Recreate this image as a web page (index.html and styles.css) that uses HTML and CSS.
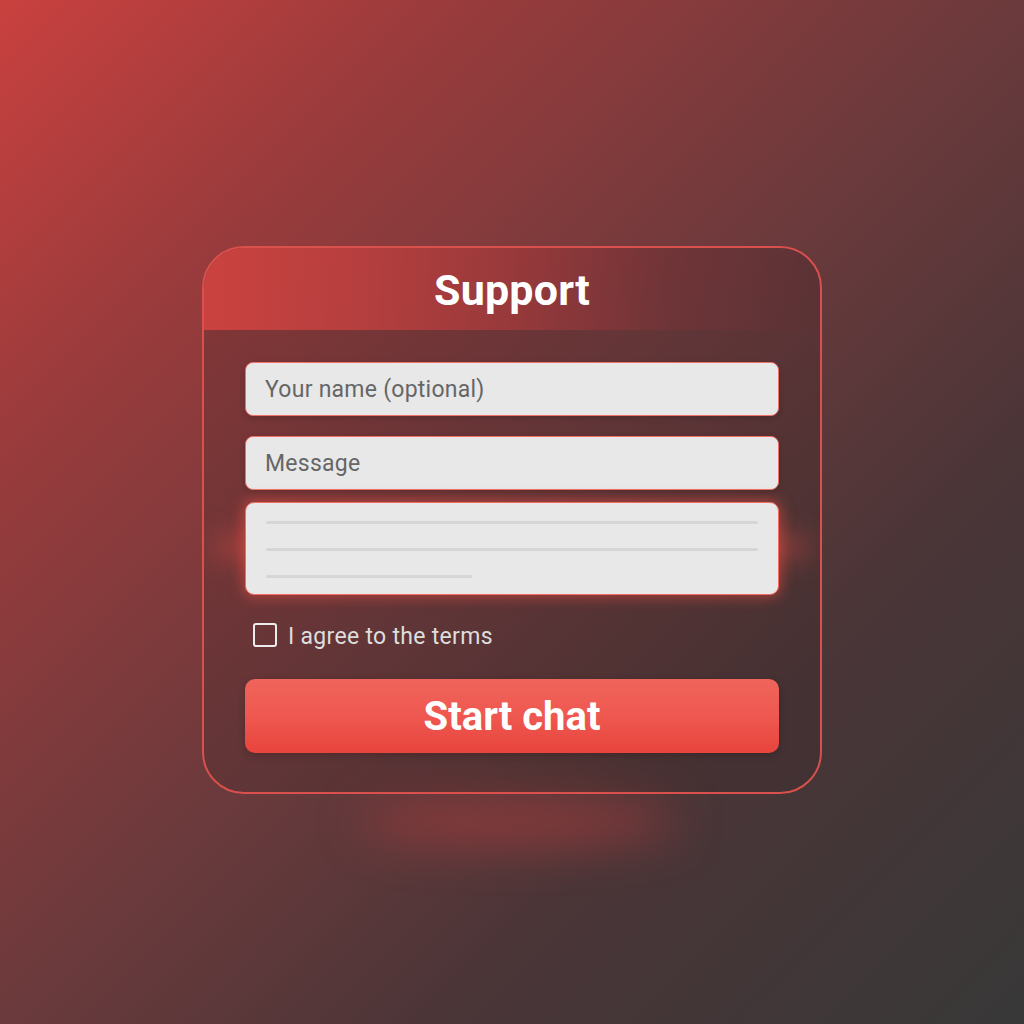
FILE: index.html
```html
<!DOCTYPE html>
<html lang="en">
<head>
<meta charset="utf-8">
<title>Support</title>
<link rel="stylesheet" href="styles.css">
</head>
<body>
<main class="stage">
  <section class="card">
    <header class="card-head">
      <h1 class="title">Support</h1>
    </header>
    <form class="card-body">
      <div class="field">Your name (optional)</div>
      <div class="field">Message</div>
      <div class="area">
        <span class="line"></span>
        <span class="line"></span>
        <span class="line short"></span>
      </div>
      <label class="check-row">
        <span class="box"></span>
        <span class="check-text">I agree to the terms</span>
      </label>
      <div class="button">Start chat</div>
    </form>
  </section>
  <div class="floor-glow"></div>
</main>
</body>
</html>
```

FILE: styles.css
```css
* { box-sizing: border-box; }
html, body { margin: 0; padding: 0; }
body {
  width: 1024px;
  height: 1024px;
  overflow: hidden;
  font-family: Roboto, "Liberation Sans", Arial, sans-serif;
  background: linear-gradient(135deg, #c9413f 0%, #9a3b3c 22%, #6b3a3c 50%, #4a3537 72%, #383838 100%);
}
.stage {
  position: relative;
  width: 1024px;
  height: 1024px;
  display: flex;
  justify-content: center;
  padding-top: 246px;
}
.card {
  position: relative;
  z-index: 1;
  width: 620px;
  height: 548px;
  border: 2px solid #d9504c;
  border-radius: 42px;
  overflow: hidden;
  background: rgba(50, 32, 34, 0.18);
  display: flex;
  flex-direction: column;
}
.card-head {
  height: 82px;
  flex: none;
  display: flex;
  align-items: center;
  justify-content: center;
  background: linear-gradient(90deg, rgba(206,67,64,0.95) 0%, rgba(190,64,63,0.88) 25%, rgba(165,58,60,0.75) 50%, rgba(120,52,56,0.55) 75%, rgba(90,48,52,0.4) 100%);
}
.title {
  margin: 0;
  color: #ffffff;
  font-size: 43px;
  font-weight: 700;
  letter-spacing: 0.2px;
  line-height: 1;
  padding-top: 2px;
}
.card-body {
  margin: 0;
  padding: 32px 41px 0 41px;
  display: flex;
  flex-direction: column;
}
.field {
  height: 54px;
  border-radius: 8px;
  background: #e8e8e8;
  border: 1px solid #f07068;
  color: #666666;
  font-size: 23px;
  letter-spacing: 0.25px;
  display: flex;
  align-items: center;
  padding-left: 19px;
  box-shadow: 0 2px 6px rgba(0,0,0,0.15);
}
.field + .field { margin-top: 20px; }
.area {
  position: relative;
  margin-top: 12px;
  height: 93px;
  border-radius: 9px;
  background: #e8e8e8;
  border: 1px solid #f26a60;
  box-shadow: 0 0 14px 2px rgba(240, 80, 68, 0.55);
  padding: 18px 20px 0 20px;
  display: flex;
  flex-direction: column;
  gap: 24px;
}
.area::before {
  content: "";
  position: absolute;
  z-index: -1;
  left: -38px;
  right: -36px;
  top: 22px;
  height: 44px;
  border-radius: 50%;
  background: rgba(230, 80, 70, 0.55);
  filter: blur(14px);
}
.line {
  display: block;
  height: 3px;
  border-radius: 2px;
  background: #d6d6d6;
}
.line.short { width: 206px; }
.check-row {
  margin-top: 28px;
  display: flex;
  align-items: center;
  padding-left: 8px;
  height: 24px;
}
.box {
  width: 24px;
  height: 24px;
  border: 2px solid #ececec;
  border-radius: 3px;
  flex: none;
}
.check-text {
  margin-left: 11px;
  color: #dedede;
  font-size: 23px;
  letter-spacing: 0.3px;
  padding-top: 2px;
}
.button {
  margin-top: 32px;
  height: 74px;
  border-radius: 10px;
  background: linear-gradient(180deg, #f0645b 0%, #ee5850 50%, #e8443c 100%);
  color: #ffffff;
  font-size: 40px;
  font-weight: 700;
  display: flex;
  align-items: center;
  justify-content: center;
  box-shadow: 0 2px 8px rgba(0,0,0,0.2);
}
.floor-glow {
  position: absolute;
  left: 360px;
  top: 800px;
  width: 320px;
  height: 44px;
  border-radius: 50%;
  background: rgba(200, 62, 62, 0.5);
  filter: blur(24px);
}
```
